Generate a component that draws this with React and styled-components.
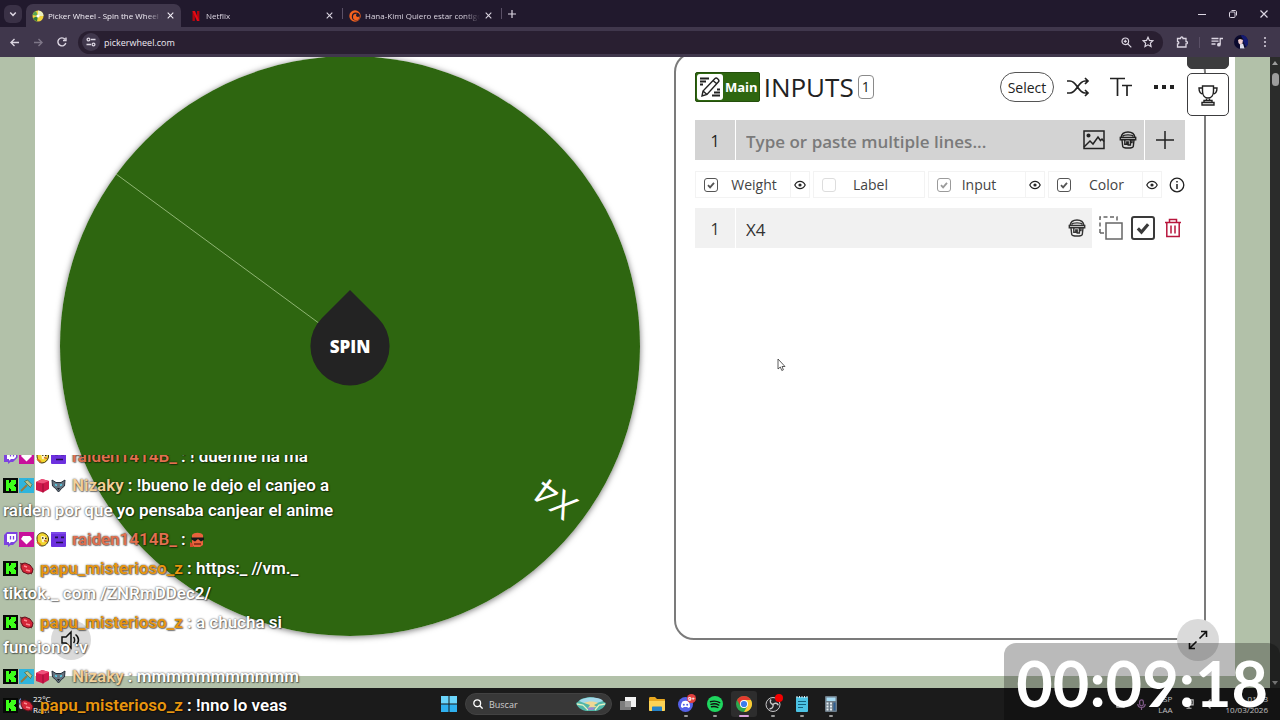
import React, { useState } from 'react';
import styled, { createGlobalStyle, css } from 'styled-components';

const uiFont = `'Open Sans', 'Noto Sans', sans-serif`;
const chatFont = `Roboto, sans-serif`;

const colors = {
  tabStrip: '#21192d',
  toolbar: '#40374c',
  address: '#291f31',
  chromeText: '#dcd6e2',
  sage: '#b2c1a9',
  wheel: '#2e6610',
  ink: '#222222',
  softInk: '#444444',
  taskbar: '#1b1b1b',
};

const GlobalStyle = createGlobalStyle`
  * {
    box-sizing: border-box;
  }
  body {
    margin: 0;
    font-family: ${uiFont};
    overflow: hidden;
  }
  button {
    font-family: inherit;
    color: inherit;
    background: none;
    border: none;
    padding: 0;
    cursor: pointer;
  }
  svg {
    display: block;
    flex: none;
  }
`;

const Screen = styled.div`
  position: relative;
  height: 100vh;
  display: flex;
  flex-direction: column;
  overflow: hidden;
`;

/* ---------- browser ---------- */

const TabStrip = styled.div`
  height: 27px;
  display: flex;
  align-items: center;
  background: ${colors.tabStrip};
  color: ${colors.chromeText};
  padding-left: 4px;
`;

const TabSearch = styled.button`
  width: 18px;
  height: 18px;
  border-radius: 6px;
  background: #3a3146;
  display: flex;
  align-items: center;
  justify-content: center;
  margin-right: 4px;
`;

const Tab = styled.div`
  height: 23px;
  width: 158px;
  display: flex;
  align-items: center;
  gap: 4px;
  padding: 0 9px 0 6px;
  align-self: flex-end;
  font-size: 8px;
  font-weight: 500;
  border-radius: 7px 7px 0 0;
  ${(props) =>
    props.$active &&
    css`
      width: 155px;
      margin-right: 3px;
      padding-right: 7px;
      background: ${colors.toolbar};
      color: #f3eff7;
    `}
`;

const TabTitle = styled.span`
  flex: 1;
  min-width: 0;
  overflow: hidden;
  white-space: nowrap;
  mask-image: linear-gradient(to right, #000 86%, transparent);
`;

const TabDivider = styled.span`
  width: 1px;
  height: 11px;
  margin: 0 ${(props) => props.$space || '0'};
  background: #5a5066;
`;

const IconButton = styled.button`
  width: ${(props) => props.$size || '24px'};
  height: ${(props) => props.$size || '24px'};
  display: flex;
  align-items: center;
  justify-content: center;
  flex: none;
  opacity: ${(props) => (props.$dim ? 0.4 : 1)};
`;

const WindowControls = styled.div`
  margin-left: auto;
  display: flex;
  gap: 7px;
  padding-right: 4px;
`;

const Toolbar = styled.div`
  height: 30px;
  display: flex;
  align-items: center;
  padding: 0 3px 0 2px;
  background: ${colors.toolbar};
  color: ${colors.chromeText};
`;

const Address = styled.div`
  flex: 1;
  height: 23px;
  margin: 0 7px 0 4px;
  padding: 0 4px 0 4px;
  display: flex;
  align-items: center;
  border-radius: 12px;
  background: ${colors.address};
`;

const SiteInfo = styled.button`
  width: 18px;
  height: 18px;
  border-radius: 50%;
  background: #40374c;
  display: flex;
  align-items: center;
  justify-content: center;
`;

const AddressInput = styled.input`
  flex: 1;
  min-width: 0;
  margin-left: 4px;
  padding: 0;
  border: none;
  outline: none;
  background: none;
  color: #eeeaf2;
  font-family: ${uiFont};
  font-size: 9px;
`;

/* ---------- page ---------- */

const Viewport = styled.div`
  flex: 1;
  min-height: 0;
  display: flex;
  overflow: hidden;
`;

const Page = styled.main`
  flex: 1;
  display: flex;
  padding: 0 35px 12px;
  background: ${colors.sage};
`;

const Sheet = styled.div`
  position: relative;
  flex: 1;
  display: grid;
  grid-template-columns: 580fr 532fr;
  gap: 34px;
  padding: 0 29px 36px 25px;
  background: #ffffff;
`;

const Scrollbar = styled.div`
  width: 10px;
  display: flex;
  flex-direction: column;
  align-items: center;
  padding: 4px 0 3px;
  background: #2b2c2b;
`;

const ScrollArrow = styled.span`
  border: 3px solid transparent;
  border-top-width: ${(props) => (props.$down ? '4px' : '0')};
  border-bottom-width: ${(props) => (props.$down ? '0' : '4px')};
  border-top-color: #9d9d9d;
  border-bottom-color: #9d9d9d;
  margin-top: ${(props) => (props.$down ? 'auto' : '0')};
`;

const ScrollThumb = styled.span`
  width: 7px;
  height: 13px;
  margin-top: 8px;
  border-radius: 4px;
  background: #9d9d9d;
`;

const WheelBox = styled.div`
  position: relative;
  align-self: start;
  margin-top: -1px;
  border-radius: 50%;
  box-shadow: 0 1px 6px rgba(0, 0, 0, 0.55);
  > svg {
    width: 100%;
    height: auto;
  }
`;

const SpinButton = styled.button`
  position: absolute;
  inset: 0;
  margin: auto;
  width: 80px;
  height: 112px;
  display: grid;
  place-items: center;
  color: #ffffff;
  font-size: 17px;
  font-weight: 800;
  > * {
    grid-area: 1 / 1;
  }
`;

const RoundButton = styled.button`
  position: absolute;
  width: ${(props) => props.$size};
  height: ${(props) => props.$size};
  bottom: ${(props) => props.$bottom};
  left: ${(props) => props.$left || 'auto'};
  right: ${(props) => props.$right || 'auto'};
  border-radius: 50%;
  background: #dadada;
  color: #111;
  display: flex;
  align-items: center;
  justify-content: center;
`;

const Panel = styled.section`
  position: relative;
  margin-top: -5px;
  padding: 18px 19px;
  border: 2px solid #7b7b7b;
  border-radius: 20px;
  color: ${colors.ink};
`;

const SideTabs = styled.div`
  position: absolute;
  top: 0;
  right: -25px;
  display: flex;
  flex-direction: column;
  gap: 4px;
`;

const SideTab = styled.button`
  width: 42px;
  height: ${(props) => (props.$active ? '15px' : '43px')};
  border: 1px solid #3c3c3e;
  border-radius: ${(props) => (props.$active ? '0 0 5px 5px' : '5px')};
  background: ${(props) => (props.$active ? '#3c3c3e' : '#ffffff')};
  display: flex;
  align-items: center;
  justify-content: center;
`;

const PanelHeader = styled.header`
  height: 30px;
  display: flex;
  align-items: center;
  margin-bottom: 18px;
`;

const WheelTag = styled.span`
  height: 30px;
  display: flex;
  align-items: center;
  gap: 2px;
  padding: 0 1px;
  border: 1px solid #244f0c;
  border-radius: 2px;
  background: ${colors.wheel};
  color: #ffffff;
  font-size: 13px;
  font-weight: 700;
`;

const TagIcon = styled.span`
  width: 26px;
  height: 26px;
  border-radius: 3px;
  background: #ffffff;
  color: #222;
  display: flex;
  align-items: center;
  justify-content: center;
`;

const PanelTitle = styled.h2`
  margin: 0 4px;
  font-size: 26px;
  font-weight: 500;
`;

const CountBadge = styled.span`
  width: 16px;
  height: 24px;
  border: 1px solid #8a8a8a;
  border-radius: 4px;
  font-size: 14px;
  line-height: 22px;
  text-align: center;
`;

const HeaderActions = styled.div`
  margin-left: auto;
  margin-right: 7px;
  display: flex;
  align-items: center;
  gap: 15px;
`;

const SelectButton = styled.button`
  height: 30px;
  width: 54px;
  margin-right: -5px;
  border: 1px solid #555;
  border-radius: 15px;
  font-size: 14px;
`;

const EntryForm = styled.form`
  height: 40px;
  display: flex;
  gap: 1px;
  margin-bottom: 11px;
`;

const RowNumber = styled.span`
  width: 40px;
  height: 40px;
  background: ${(props) => props.$fill};
  font-size: 16px;
  font-weight: ${(props) => props.$weight || 400};
  line-height: 42px;
  text-align: center;
`;

const FieldBox = styled.div`
  flex: 1;
  min-width: 0;
  height: 40px;
  display: flex;
  align-items: center;
  gap: 12px;
  padding: 0 ${(props) => props.$end || '6px'} 0 10px;
  background: ${(props) => props.$fill};
`;

const TextField = styled.input`
  flex: 1;
  min-width: 0;
  padding: 2px 0 0;
  border: none;
  outline: none;
  background: none;
  color: #333;
  font-family: ${uiFont};
  font-size: 17px;
  font-weight: ${(props) => props.$weight || 400};
  &::placeholder {
    color: #7a7a7a;
    opacity: 1;
  }
`;

const AddButton = styled.button`
  width: 40px;
  background: #d3d3d3;
  display: flex;
  align-items: center;
  justify-content: center;
`;

const ColumnToggles = styled.div`
  height: 27px;
  display: grid;
  grid-template-columns: 118fr 115fr 120fr 117fr 20px;
  align-items: center;
  margin-bottom: 10px;
`;

const ToggleCell = styled.div`
  height: 27px;
  display: flex;
  align-items: center;
  margin-right: 3px;
  padding-left: 8px;
  border: 1px solid #f3f3f3;
  color: ${colors.softInk};
  font-size: 14px;
`;

const ToggleLabel = styled.label`
  flex: 1;
  padding-right: ${(props) => props.$inset || '0'};
  text-align: center;
`;

const EyeButton = styled.button`
  width: 19px;
  height: 25px;
  border-left: 1px solid #f3f3f3;
  color: ${colors.ink};
  display: flex;
  align-items: center;
  justify-content: center;
`;

const CheckFrame = styled.span`
  position: relative;
  width: ${(props) => props.$size};
  height: ${(props) => props.$size};
  flex: none;
  color: ${(props) => props.$color};
  svg {
    position: absolute;
    inset: 0;
    width: 100%;
    height: 100%;
    pointer-events: none;
  }
`;

const CheckInput = styled.input`
  appearance: none;
  display: block;
  width: 100%;
  height: 100%;
  margin: 0;
  color: inherit;
  border: ${(props) => props.$line} solid currentColor;
  border-radius: 3px;
  &:not(:checked) + svg {
    display: none;
  }
`;

const EntryRow = styled.div`
  height: 40px;
  display: flex;
  align-items: center;
  color: #333;
`;

const EntryName = styled(FieldBox)`
  margin-left: 1px;
`;

const EntryActions = styled.div`
  display: flex;
  align-items: center;
  gap: 8px;
  padding: 0 2px 0 7px;
`;

/* ---------- taskbar ---------- */

const Taskbar = styled.footer`
  height: 32px;
  display: grid;
  grid-template-columns: 1fr auto 1fr;
  align-items: center;
  background: ${colors.taskbar};
  color: #ffffff;
`;

const Weather = styled.div`
  display: flex;
  align-items: center;
  gap: 4px;
  padding-left: 16px;
  font-size: 8px;
  line-height: 11px;
`;

const TaskItems = styled.div`
  display: flex;
  align-items: center;
  gap: 3px;
`;

const TaskItem = styled.button`
  position: relative;
  width: 26px;
  height: 26px;
  border-radius: 3px;
  display: flex;
  align-items: center;
  justify-content: center;
  background: ${(props) => (props.$active ? '#2d2d2d' : 'none')};
  &::after {
    content: '';
    display: ${(props) => (props.$running ? 'block' : 'none')};
    position: absolute;
    bottom: 0;
    width: ${(props) => (props.$active ? '10px' : '4px')};
    height: 2px;
    border-radius: 1px;
    background: ${(props) => (props.$active ? '#d9a3dc' : '#9a9a9a')};
  }
`;

const TaskSearch = styled.label`
  width: 147px;
  height: 22px;
  display: flex;
  align-items: center;
  gap: 6px;
  padding: 0 4px 0 7px;
  border-radius: 11px;
  background: #383838;
  border: 1px solid #424242;
`;

const TaskSearchInput = styled.input`
  flex: 1;
  min-width: 0;
  padding: 0;
  border: none;
  outline: none;
  background: none;
  color: #ffffff;
  font-family: ${uiFont};
  font-size: 9px;
  &::placeholder {
    color: #cfcfcf;
  }
`;

const Tray = styled.div`
  display: flex;
  align-items: center;
  justify-content: flex-end;
  gap: 11px;
  padding-right: 12px;
  font-size: 8px;
  line-height: 11px;
`;

const TrayText = styled.span`
  text-align: ${(props) => props.$align};
`;

/* ---------- stream overlays ---------- */

const Chat = styled.div`
  position: absolute;
  left: 0;
  bottom: 0;
  width: 350px;
  height: 265px;
  display: flex;
  flex-direction: column;
  justify-content: flex-end;
  gap: 4px;
  padding: 0 3px 2px;
  overflow: hidden;
  font-family: ${chatFont};
  font-size: 17px;
  font-weight: 600;
  line-height: 25px;
  color: #ffffff;
  text-shadow: 0 0 2px rgba(0, 0, 0, 0.8), 1px 1px 1px rgba(0, 0, 0, 0.4);
  pointer-events: none;
`;

const Message = styled.p`
  margin: 0;
  flex: none;
`;

const Badges = styled.span`
  display: inline-flex;
  gap: 1px;
  margin-right: 6px;
  vertical-align: -2px;
`;

const Author = styled.b`
  font-weight: 600;
  color: ${(props) => props.$color};
`;

const Timer = styled.time`
  position: absolute;
  right: 0;
  bottom: 0;
  height: 77px;
  padding: 0 12px;
  border-radius: 12px 12px 0 0;
  background: rgba(0, 0, 0, 0.27);
  color: #ffffff;
  font-family: Lato, sans-serif;
  font-size: 63px;
  font-weight: 700;
  line-height: 80px;
`;

const Pointer = styled.svg`
  position: absolute;
  left: 777px;
  top: 358px;
`;

/* ---------- drawings ---------- */

const Icon = ({ size = 16, box = 24, stroke = 2, children, ...rest }) => (
  <svg
    width={size}
    height={size}
    viewBox={`0 0 ${box} ${box}`}
    fill="none"
    stroke="currentColor"
    strokeWidth={stroke}
    aria-hidden="true"
    {...rest}
  >
    {children}
  </svg>
);

const CloseIcon = ({ size = 7 }) => (
  <Icon size={size} box={10} stroke={1.5}>
    <path d="M1 1l8 8M9 1L1 9" />
  </Icon>
);

const WheelFavicon = () => (
  <svg width="12" height="12" viewBox="0 0 12 12" aria-hidden="true">
    <circle cx="6" cy="6" r="5.5" fill="#f3d43b" />
    <path d="M6 6V.5A5.5 5.5 0 0 1 11.5 6z" fill="#e9efc0" />
    <path d="M6 6L.5 5A5.5 5.5 0 0 1 4 .9z" fill="#5aa552" />
    <path d="M6 6L1 8A5.5 5.5 0 0 0 5 11.4z" fill="#2f7c3a" />
    <circle cx="6" cy="6" r="1.6" fill="#fff" />
  </svg>
);

const NetflixFavicon = () => (
  <svg width="12" height="12" viewBox="0 0 12 12" aria-hidden="true">
    <path d="M2.5 1h2.4v10H2.5zM7 1h2.4v10H7z" fill="#b1060f" />
    <path d="M2.5 1h2.4l4.5 10H7z" fill="#e50914" />
  </svg>
);

const CrunchyFavicon = () => (
  <svg width="12" height="12" viewBox="0 0 12 12" aria-hidden="true">
    <circle cx="6" cy="6" r="5.7" fill="#f4621e" />
    <circle cx="6.8" cy="6.6" r="4" fill="#21192d" />
    <circle cx="7.2" cy="7" r="3.2" fill="#f4621e" />
    <circle cx="8.8" cy="5.2" r="1.7" fill="#21192d" />
  </svg>
);

const EyeIcon = () => (
  <Icon size={12} box={12} stroke={1.2}>
    <path d="M.8 6C2 3.6 3.8 2.4 6 2.4S10 3.6 11.2 6C10 8.4 8.2 9.6 6 9.6S2 8.4.8 6z" />
    <circle cx="6" cy="6" r="1" fill="currentColor" />
  </Icon>
);

const BucketIcon = () => (
  <Icon size={18} box={18} stroke={1.4}>
    <path d="M2 6.500C2.500 3 5 1 9 1s6.500 2 7 5.500" />
    <path d="M3.500 5.500C5 3.300 13 3.300 14.500 5.500" />
    <path d="M1.300 6.500h15.400v2.200H1.300z" />
    <path d="M3 9l.7 6.300c.4 2.300 10.200 2.300 10.600 0L15 9" />
    <path d="M5.800 9v4.200h2V11h1.400v3h2.200V9M11.400 11.500h1.600V9" />
  </Icon>
);

const pixelBadges = {
  kick: (
    <>
      <rect width="15" height="15" fill="#060906" />
      <path d="M3 2h3v3h1V4h1V2h5v4h-1v1h-1v1h1v1h1v4H8v-2H7v-1H6v3H3z" fill="#3dff1a" />
    </>
  ),
  hammer: (
    <>
      <rect width="15" height="15" fill="#2fb4dc" />
      <path d="M2 13l6-6" stroke="#9a7b3d" strokeWidth="1.8" />
      <path d="M5.5 3.5l3-1.5 4.500 4.500-1.500 3z" fill="#b9c48f" stroke="#47683f" strokeWidth=".7" />
    </>
  ),
  cube: (
    <>
      <path d="M1 4l6-3 7 2v8l-6 3.500-7-2.500z" fill="#d0174c" />
      <path d="M1 4l6-3 7 2-6 2.500z" fill="#f0527c" />
      <path d="M8 5.500v9" stroke="#980d35" />
    </>
  ),
  wolf: (
    <>
      <path d="M1 2l4 2.500h5L14 2l-.5 6-3 2.500L7.500 14l-3-3.500-3-2.500z" fill="#66737f" stroke="#27303b" />
      <path d="M4 6.500l2 1M11 6.500l-2 1" stroke="#57cfe8" strokeWidth="1.400" />
      <path d="M6 10h3l-1.500 2z" fill="#17191f" />
    </>
  ),
  twitch: (
    <>
      <path d="M1 3l3-3h10.500v8.500L10 13H7.500L5 15v-2H1z" fill="#7d43e0" />
      <path d="M4 2h9v6l-2 2H8l-2 1.800V10H4z" fill="#fff" />
      <path d="M7.500 4v3.500M10.500 4v3.500" stroke="#7d43e0" strokeWidth="1.300" />
    </>
  ),
  gem: (
    <>
      <rect width="15" height="15" fill="#c8109b" />
      <path d="M4 4h7l2 3-5.500 5.500L2 7z" fill="#fff" />
    </>
  ),
  chick: (
    <>
      <path d="M2 6c0-4 4-6 7-5s5 4 4.500 7-3 6-6.500 6-5-4-5-8z" fill="#f2d62e" stroke="#3d3111" />
      <path d="M6 4.500c2-1 5 0 5.500 2.500S9 11 7 10z" fill="#fff7c8" />
      <path d="M7 6h1.500M10 6.500h1.500" stroke="#2b2110" strokeWidth="1.500" />
      <path d="M2 10l4 3M9 8.500l3 1" stroke="#d9761b" strokeWidth="1.600" />
    </>
  ),
  block: (
    <>
      <rect width="15" height="15" rx="1" fill="#6d31df" />
      <path d="M4 4.500h3v1.800H4zM10 4.500h3v1.800h-3z" fill="#22104f" />
      <path d="M5 10.500h7" stroke="#22104f" strokeWidth="1.500" />
      <path d="M0 0h15v2H0z" fill="#7c49e8" />
    </>
  ),
  bug: (
    <>
      <path d="M2 3l4-1 5 2 3 4-1 4-4 1-5-2-2-4z" fill="#d32638" stroke="#5f101c" />
      <path d="M5 5l3 1M7 9l4 1" stroke="#ff8b93" strokeWidth="1.400" />
      <path d="M1 2l3 2M13 13l-2-1" stroke="#6f1b25" />
    </>
  ),
  cool: (
    <>
      <path d="M2 3c2-3 9-3 11 0v10l-3 2H4l-2-2z" fill="#e8623c" />
      <path d="M1 5.500h13v2.200L11 9.500 8 7 5 9.500 1.500 7.500z" fill="#15181a" />
      <path d="M4 12h7" stroke="#7c2414" strokeWidth="1.500" />
      <path d="M0 10l3 2v3H0z" fill="#d04a2c" />
    </>
  ),
};

const PixelBadge = ({ kind }) => (
  <svg width="15" height="15" viewBox="0 0 15 15" aria-hidden="true">
    {pixelBadges[kind]}
  </svg>
);

const taskIcons = {
  windows: (
    <>
      <path d="M0 0h7.500v7.500H0zM8.500 0H16v7.500H8.500z" fill="#6bd5fb" />
      <path d="M0 8.500h7.500V16H0zM8.500 8.500H16V16H8.500z" fill="#2fb0ee" />
    </>
  ),
  views: (
    <>
      <rect x="5" y="1" width="11" height="10" fill="#f2f2f2" />
      <rect x="0" y="5" width="11" height="9" fill="#8d8d8d" opacity=".85" />
    </>
  ),
  folder: (
    <>
      <path d="M0 2.500C0 1.500.5 1 1.500 1H6l2 2h7c.7 0 1 .3 1 1v9H0z" fill="#e9a820" />
      <path d="M0 5h16v9c0 .7-.3 1-1 1H1c-.7 0-1-.3-1-1z" fill="#fcd255" />
      <path d="M4 10.500h8c.7 0 1 .3 1 1V15H3v-3.500c0-.7.3-1 1-1z" fill="#2582c8" />
    </>
  ),
  discord: (
    <>
      <circle cx="7.500" cy="8.500" r="7.500" fill="#5561e8" />
      <path d="M4.500 5.500c2-1 4-1 6 0 1 1.500 1.700 3.500 1.500 5.500-1 .8-2 1-2 1l-.7-1.100H5.700L5 12s-1-.2-2-1c-.2-2 .5-4 1.500-5.500z" fill="#fff" />
      <circle cx="5.800" cy="8.800" r="1" fill="#5561e8" />
      <circle cx="9.200" cy="8.800" r="1" fill="#5561e8" />
      <circle cx="13.500" cy="2.500" r="4.500" fill="#e2403f" />
      <text x="13.500" y="4.700" fontSize="6" fontWeight="700" fill="#fff" textAnchor="middle">
        9+
      </text>
    </>
  ),
  spotify: (
    <>
      <circle cx="8" cy="8" r="8" fill="#1fd65f" />
      <path
        d="M3.500 5.700c3-.9 6.500-.6 9.200.9M4 8.300c2.600-.8 5.500-.5 7.800.8M4.500 10.800c2.200-.6 4.400-.4 6.400.7"
        fill="none"
        stroke="#111"
        strokeWidth="1.400"
        strokeLinecap="round"
      />
    </>
  ),
  chrome: (
    <>
      <circle cx="8" cy="8" r="8" fill="#2da94f" />
      <path d="M1.070 4A8 8 0 0 1 14.930 4H8z" fill="#e33b2e" />
      <path d="M1.070 4L4.540 10 8 8V4z" fill="#e33b2e" />
      <path d="M14.930 4A8 8 0 0 1 8 16l3.460-6L8 4z" fill="#fcc934" />
      <circle cx="8" cy="8" r="4" fill="#fff" />
      <circle cx="8" cy="8" r="3.100" fill="#3b7ded" />
    </>
  ),
  obs: (
    <>
      <circle cx="8" cy="8.500" r="7" fill="#252427" stroke="#c9c9c9" />
      <path
        d="M8 8.500c-2.500-.5-3.500-3-2-5M8 8.500c1.700-2 4.500-1.500 5.300.8M8 8.500c.7 2.500-1 4.500-3.500 4.200"
        fill="none"
        stroke="#c9c9c9"
        strokeWidth="1.400"
      />
      <circle cx="14" cy="2" r="4" fill="#f40000" />
    </>
  ),
  notepad: (
    <>
      <rect x="2" y="1" width="12" height="15" rx="1" fill="#4cc3e4" />
      <path d="M3 0v2M5.500 0v2M8 0v2M10.500 0v2M13 0v2" stroke="#d5e9ef" />
      <path d="M4 5.500h8M4 8.500h8M4 11.500h5" stroke="#14627e" strokeWidth="1.200" />
    </>
  ),
  calculator: (
    <>
      <rect x="2" y="0" width="12" height="16" rx="1" fill="#6d7c88" />
      <rect x="3.500" y="1.500" width="9" height="3.500" fill="#a8dcf4" />
      <path d="M3.500 6.500h2v2h-2zM7 6.500h2v2H7zM3.500 9.500h2v2h-2zM7 9.500h2v2H7zM3.500 12.500h2v2h-2zM7 12.500h2v2H7z" fill="#e6edf2" />
      <path d="M10.500 6.500h2v8h-2z" fill="#2f5f92" />
    </>
  ),
};

const TaskIcon = ({ kind }) => (
  <svg width="16" height="16" viewBox="0 0 16 16" overflow="visible" aria-hidden="true">
    {taskIcons[kind]}
  </svg>
);

/* ---------- data ---------- */

const users = {
  nizaky: { name: 'Nizaky', color: '#f2cf98', badges: ['kick', 'hammer', 'cube', 'wolf'] },
  raiden: { name: 'raiden1414B_', color: '#e2704f', badges: ['twitch', 'gem', 'chick', 'block'] },
  papu: { name: 'papu_misterioso_z', color: '#e8960f', badges: ['kick', 'bug'] },
};

const messages = [
  { user: users.raiden, text: '! duerme na ma' },
  {
    user: users.nizaky,
    text: '!bueno le dejo el canjeo a raiden por que yo pensaba canjear el anime',
  },
  { user: users.raiden, emote: 'cool' },
  { user: users.papu, text: 'https:_ //vm._ tiktok._ com /ZNRmDDec2/' },
  { user: users.papu, text: 'a chucha si funciono :v' },
  { user: users.nizaky, text: 'mmmmmmmmmmm' },
  { user: users.papu, text: '!nno lo veas' },
];

const columns = [
  { id: 'weight', label: 'Weight', checked: true, color: '#555', eye: true },
  { id: 'label', label: 'Label', checked: false, color: '#dddddd', inset: '19px' },
  { id: 'input', label: 'Input', checked: true, color: '#9b9b9b', inset: '18px', eye: true },
  { id: 'color', label: 'Color', checked: true, color: '#555', eye: true },
];

const taskApps = [
  { kind: 'views', name: 'Vista de tareas' },
  { kind: 'folder', name: 'Explorador' },
  { kind: 'discord', name: 'Discord', running: true },
  { kind: 'spotify', name: 'Spotify', running: true },
  { kind: 'chrome', name: 'Chrome', running: true, active: true },
  { kind: 'obs', name: 'OBS', running: true },
  { kind: 'notepad', name: 'Bloc de notas', running: true },
  { kind: 'calculator', name: 'Calculadora', running: true },
];

/* ---------- sections ---------- */

const BrowserTab = ({ icon, title, active }) => (
  <Tab $active={active}>
    {icon}
    <TabTitle>{title}</TabTitle>
    <IconButton $size="8px" aria-label="Close tab">
      <CloseIcon />
    </IconButton>
  </Tab>
);

const BrowserTabs = () => (
  <TabStrip>
    <TabSearch aria-label="Search tabs">
      <Icon size={8} box={10} stroke={1.8}>
        <path d="M1.500 3.200L5 6.700l3.500-3.500" />
      </Icon>
    </TabSearch>
    <BrowserTab active icon={<WheelFavicon />} title="Picker Wheel - Spin the Wheel t" />
    <BrowserTab icon={<NetflixFavicon />} title="Netflix" />
    <TabDivider />
    <BrowserTab icon={<CrunchyFavicon />} title="Hana-Kimi Quiero estar contigo" />
    <TabDivider />
    <IconButton $size="20px" aria-label="New tab">
      <Icon size={8} box={10} stroke={1.5}>
        <path d="M5 0v10M0 5h10" />
      </Icon>
    </IconButton>
    <WindowControls>
      <IconButton aria-label="Minimize">
        <Icon size={8} box={8} stroke={1}>
          <path d="M0 4.500h8" />
        </Icon>
      </IconButton>
      <IconButton aria-label="Restore">
        <Icon size={8} box={8} stroke={1}>
          <rect x=".5" y="2" width="5.500" height="5.500" rx="1" />
          <path d="M2.500.5H6c1 0 1.500.5 1.500 1.500v3.500" />
        </Icon>
      </IconButton>
      <IconButton aria-label="Close">
        <Icon size={8} box={8} stroke={1.2}>
          <path d="M.5.5l7 7M7.500.5l-7 7" />
        </Icon>
      </IconButton>
    </WindowControls>
  </TabStrip>
);

const BrowserToolbar = () => (
  <Toolbar>
    <IconButton aria-label="Back">
      <Icon size={9} box={10} stroke={1.5}>
        <path d="M10 5H1.500M5 1L1 5l4 4" />
      </Icon>
    </IconButton>
    <IconButton aria-label="Forward" $dim>
      <Icon size={9} box={10} stroke={1.5}>
        <path d="M0 5h8.500M5 1l4 4-4 4" />
      </Icon>
    </IconButton>
    <IconButton aria-label="Reload">
      <Icon size={10} box={10} stroke={1.4}>
        <path d="M8.800 6A4 4 0 1 1 8 2.300M9 .5v3H6" />
      </Icon>
    </IconButton>
    <Address>
      <SiteInfo aria-label="Site information">
        <Icon size={10} box={10} stroke={1.3}>
          <circle cx="2.500" cy="2.500" r="1.400" />
          <circle cx="7.500" cy="7.500" r="1.400" />
          <path d="M5 2.500h4.500M.5 7.500H5" />
        </Icon>
      </SiteInfo>
      <AddressInput aria-label="Address" defaultValue="pickerwheel.com" />
      <IconButton $size="22px" aria-label="Zoom">
        <Icon size={11} box={11} stroke={1.2}>
          <circle cx="4.300" cy="4.300" r="3.300" />
          <path d="M6.800 6.800L10.300 10.300M2.800 4.300h3M4.300 2.800v3" />
        </Icon>
      </IconButton>
      <IconButton $size="22px" aria-label="Bookmark">
        <Icon size={12} box={24} stroke={2.4}>
          <path d="M12 2.500l2.900 6.300 6.900.8-5.100 4.700 1.400 6.800L12 17.700l-6.100 3.400 1.400-6.800L2.200 9.600l6.900-.8z" />
        </Icon>
      </IconButton>
    </Address>
    <IconButton aria-label="Extensions">
      <Icon size={12} box={12} stroke={1.3}>
        <path d="M1.500 2.500h3c0-2 2.500-2 2.500 0h3v3c2 0 2 2.500 0 2.500v3H1.500V8c1.800 0 1.800-2.500 0-2.500z" />
      </Icon>
    </IconButton>
    <TabDivider $space="5px" />
    <IconButton aria-label="Media">
      <Icon size={12} box={12} stroke={1.3}>
        <path d="M.5 2.500h7M.5 5.200h7M.5 8h4M9.200 8.500V2.500H12" />
        <circle cx="7.900" cy="8.700" r="1.200" fill="currentColor" />
      </Icon>
    </IconButton>
    <IconButton aria-label="Profile">
      <svg width="14" height="14" viewBox="0 0 14 14" aria-hidden="true">
        <circle cx="7" cy="7" r="7" fill="#0b0a2e" />
        <path d="M7 0a7 7 0 0 1 5 12L9 6z" fill="#141a72" />
        <path d="M4 4.500C5 3 8 3 9 4.500l-.5 3.500L6.500 10 4.500 8z" fill="#f2cfd0" />
        <path d="M6 9.500l3-1 1.500 5H6z" fill="#dfe0ee" />
        <path d="M3.500 5C4 1.500 9 1.500 9.500 5L6 4z" fill="#0a0914" />
      </svg>
    </IconButton>
    <IconButton aria-label="Menu">
      <svg width="4" height="12" viewBox="0 0 4 12" fill="currentColor" aria-hidden="true">
        <circle cx="2" cy="2" r="1" />
        <circle cx="2" cy="6" r="1" />
        <circle cx="2" cy="10" r="1" />
      </svg>
    </IconButton>
  </Toolbar>
);

const Wheel = () => (
  <WheelBox>
    <svg viewBox="0 0 580 580" aria-label="Wheel">
      <circle cx="290" cy="290" r="290" fill={colors.wheel} />
      <path d="M56 118L290 290" stroke="#8fb573" />
      <text
        transform="translate(495 443) rotate(216)"
        fontFamily={uiFont}
        fontSize="36"
        fill="#ffffff"
        textAnchor="middle"
        y="13"
      >
        X4
      </text>
    </svg>
    <SpinButton>
      <svg width="80" height="112" viewBox="0 0 80 112" aria-hidden="true">
        <path d="M40 0L68 28A39.600 39.600 0 1 1 12 28z" fill="#232323" />
      </svg>
      <span>SPIN</span>
    </SpinButton>
  </WheelBox>
);

const CheckBox = ({ id, label, checked, color, size = '14px', line = '1px' }) => {
  const [on, setOn] = useState(checked);
  return (
    <CheckFrame $size={size} $color={color}>
      <CheckInput
        id={id}
        type="checkbox"
        aria-label={label}
        $line={line}
        checked={on}
        onChange={() => setOn(!on)}
      />
      <Icon box={14} stroke={1.8}>
        <path d="M4 7.200l2.100 2.200L10 4.800" />
      </Icon>
    </CheckFrame>
  );
};

const InputsPanel = () => (
  <Panel>
    <PanelHeader>
      <WheelTag>
        <TagIcon>
          <Icon size={22} box={22} stroke={1.4}>
            <path d="M1 2.500h9M1 5.500h6M1 8.500h3M13 19.500h8M15 16.500h6M18 13.500h3" strokeWidth="1.800" />
            <path d="M3 20l1-5L16 2.500c1.500-1.500 5 1.500 3.500 3.200L8 18.500zM14 4.500l4 3.500M4 15l4 3.500" />
          </Icon>
        </TagIcon>
        Main
      </WheelTag>
      <PanelTitle>INPUTS</PanelTitle>
      <CountBadge>1</CountBadge>
      <HeaderActions>
        <SelectButton>Select</SelectButton>
        <IconButton $size="28px" aria-label="Shuffle">
          <Icon size={24} box={24} stroke={1.7}>
            <path d="M1 6h3c7 0 8 12 15 12h3M1 18h3c7 0 8-12 15-12h3M19 3l3 3-3 3M19 15l3 3-3 3" />
          </Icon>
        </IconButton>
        <IconButton $size="28px" aria-label="Text size">
          <Icon size={22} box={22} stroke={1.7}>
            <path d="M0 2.500h15M7.500 2.500V20M12 9.500h10M17 9.500V20" />
          </Icon>
        </IconButton>
        <IconButton $size="28px" aria-label="More">
          <svg width="22" height="4" viewBox="0 0 22 4" fill="currentColor" aria-hidden="true">
            <path d="M1 0h4v4H1zM9 0h4v4H9zM17 0h4v4h-4z" />
          </svg>
        </IconButton>
      </HeaderActions>
    </PanelHeader>

    <EntryForm onSubmit={(e) => e.preventDefault()}>
      <RowNumber $fill="#d3d3d3" $weight={500}>
        1
      </RowNumber>
      <FieldBox $fill="#d3d3d3">
        <TextField
          aria-label="New entries"
          placeholder="Type or paste multiple lines..."
          $weight={600}
        />
        <IconButton $size="24px" type="button" aria-label="Add image">
          <Icon size={22} box={22} stroke={1.5}>
            <rect x="1" y="2" width="20" height="17.500" />
            <circle cx="5.500" cy="6.500" r="1.300" fill="currentColor" />
            <path d="M1 18l6-6 3 3 5-7 2.500 3.500L19 10l2 2.500" />
          </Icon>
        </IconButton>
        <IconButton $size="20px" type="button" aria-label="Pick color">
          <BucketIcon />
        </IconButton>
      </FieldBox>
      <AddButton type="submit" aria-label="Add">
        <Icon size={18} box={18} stroke={1.5}>
          <path d="M9 0v18M0 9h18" />
        </Icon>
      </AddButton>
    </EntryForm>

    <ColumnToggles>
      {columns.map((col) => (
        <ToggleCell key={col.id}>
          <CheckBox id={col.id} checked={col.checked} color={col.color} />
          <ToggleLabel htmlFor={col.id} $inset={col.inset}>
            {col.label}
          </ToggleLabel>
          {col.eye && (
            <EyeButton aria-label={`Show ${col.label}`}>
              <EyeIcon />
            </EyeButton>
          )}
        </ToggleCell>
      ))}
      <IconButton $size="24px" aria-label="Help">
        <Icon size={16} box={16} stroke={1.3}>
          <circle cx="8" cy="8" r="6.800" />
          <path d="M8 7v5M8 4v1.600" strokeWidth="1.500" />
        </Icon>
      </IconButton>
    </ColumnToggles>

    <EntryRow>
      <RowNumber $fill="#f1f1f1">1</RowNumber>
      <EntryName $fill="#f1f1f1" $end="5px">
        <TextField aria-label="Entry 1" defaultValue="X4" />
        <IconButton $size="20px" aria-label="Entry color">
          <BucketIcon />
        </IconButton>
      </EntryName>
      <EntryActions>
        <IconButton $size="24px" aria-label="Duplicate">
          <Icon size={24} box={24} stroke={1.5} color="#666">
            <path d="M1 17V1h17v5M1 17h4" strokeDasharray="4 2.500" />
            <rect x="7" y="7" width="16" height="16" />
          </Icon>
        </IconButton>
        <CheckBox label="Enable entry" checked color="#3a3a3a" size="24px" line="2px" />
        <IconButton $size="20px" aria-label="Delete">
          <Icon size={20} box={20} stroke={1.5} color="#b8163d">
            <path d="M2 4.500h16M6.500 4.500V1.500h7v3M3.800 4.500v14h12.400v-14M8 7.500v8M12 7.500v8" />
          </Icon>
        </IconButton>
      </EntryActions>
    </EntryRow>

    <SideTabs>
      <SideTab $active aria-label="Inputs" />
      <SideTab aria-label="Results">
        <Icon size={22} box={22} stroke={1.4}>
          <path d="M5.500 2h11v5c0 4-2 7-5.500 7S5.500 11 5.500 7zM5.500 4H2c0 4 1 6 4.500 6M16.500 4H20c0 4-1 6-4.500 6M9.500 14v2.500h3V14M7 16.500h8v2H7zM5 18.500h12V21H5z" />
        </Icon>
      </SideTab>
    </SideTabs>
  </Panel>
);

const WindowsTaskbar = () => (
  <Taskbar>
    <Weather>
      <svg width="13" height="14" viewBox="0 0 13 14" aria-hidden="true">
        <path d="M5 1a4 4 0 1 0 5 6A5 5 0 0 1 5 1z" fill="#6a8fe0" />
        <path d="M3 9c0-3 4-4 5-2 3-.5 4 1 4 2.500S11 12 9 12H5C3.500 12 3 10.500 3 9z" fill="#c7d2e4" />
      </svg>
      <span>
        22°C
        <br />
        Rain
      </span>
    </Weather>
    <TaskItems>
      <TaskItem aria-label="Inicio">
        <TaskIcon kind="windows" />
      </TaskItem>
      <TaskSearch>
        <Icon size={10} box={10} stroke={1.3}>
          <circle cx="4.200" cy="4.200" r="3.400" />
          <path d="M6.800 6.800L9.600 9.600" />
        </Icon>
        <TaskSearchInput aria-label="Buscar" placeholder="Buscar" />
        <svg width="32" height="16" viewBox="0 0 32 16" aria-hidden="true">
          <path d="M1 7c3-1 4-5 9-5 5-2 9-1 12 1 5 0 6 3 9 4-1 4-5 7-10 8H11C6 14 2 11 1 7z" fill="#51b6a9" />
          <path d="M4 5c4-4 20-5 24 0l-6 2H9z" fill="#a5d9ea" />
          <path d="M9 7c4-2 10-2 14 0l-4 2 3 2-9 1 2-3z" fill="#f0d795" />
          <path d="M2 8l6 1 5 5M30 8l-6 1-4 5" stroke="#e4f1c4" strokeWidth="1.300" fill="none" />
          <path d="M12 12c3-1 6-1 8 0l-2 2h-4z" fill="#9a8bd2" />
        </svg>
      </TaskSearch>
      {taskApps.map((app) => (
        <TaskItem key={app.kind} aria-label={app.name} $running={app.running} $active={app.active}>
          <TaskIcon kind={app.kind} />
        </TaskItem>
      ))}
    </TaskItems>
    <Tray>
      <Icon size={9} box={10} stroke={1.3}>
        <path d="M1 2h8v6H1zM3 8l5-5" />
      </Icon>
      <Icon size={11} box={12} stroke={1.3} color="#b57fc0">
        <rect x="4" y="1" width="4" height="6.500" rx="2" />
        <path d="M2 5.500c0 5 8 5 8 0M6 9.500V12" />
      </Icon>
      <TrayText $align="center">
        ESP
        <br />
        LAA
      </TrayText>
      <Icon size={10} box={12} stroke={1.3}>
        <path d="M1 1h10v6H1zM6 7v4M3 11h6" />
      </Icon>
      <Icon size={10} box={12} stroke={1.3}>
        <path d="M1 4h2l3-3v10L3 8H1zM8.500 4c1 1 1 3 0 4" />
      </Icon>
      <TrayText $align="right">
        01:23
        <br />
        10/03/2026
      </TrayText>
    </Tray>
  </Taskbar>
);

const StreamChat = () => (
  <Chat>
    {messages.map(({ user, text, emote }, index) => (
      <Message key={index}>
        <Badges>
          {user.badges.map((kind) => (
            <PixelBadge key={kind} kind={kind} />
          ))}
        </Badges>
        <Author $color={user.color}>{user.name}</Author> : {text}
        {emote && (
          <Badges>
            <PixelBadge kind={emote} />
          </Badges>
        )}
      </Message>
    ))}
  </Chat>
);

export default function App() {
  return (
    <Screen>
      <GlobalStyle />
      <BrowserTabs />
      <BrowserToolbar />
      <Viewport>
        <Page>
          <Sheet>
            <Wheel />
            <InputsPanel />
            <RoundButton $size="40px" $bottom="16px" $left="16px" aria-label="Sound">
              <Icon size={20} box={20} stroke={1.5}>
                <path d="M1 7h4l5-5v16l-5-5H1zM12.500 7c1.500 1.500 1.500 4.500 0 6M14.500 4.500c4 3 4 8 0 11" />
              </Icon>
            </RoundButton>
            <RoundButton $size="42px" $bottom="15px" $right="16px" aria-label="Fullscreen">
              <Icon size={20} box={20} stroke={1.6}>
                <path d="M11.500 8.500L18.500 1.500M13 1.500h5.500V7M8.500 11.500L1.500 18.500M1.500 13v5.500H7" />
              </Icon>
            </RoundButton>
          </Sheet>
        </Page>
        <Scrollbar>
          <ScrollArrow />
          <ScrollThumb />
          <ScrollArrow $down />
        </Scrollbar>
      </Viewport>
      <WindowsTaskbar />
      <StreamChat />
      <Timer>00:09:18</Timer>
      <Pointer width="9" height="14" viewBox="0 0 9 14" aria-hidden="true">
        <path d="M1 1v10l2.300-2 1.500 3.500 1.600-.7L5 8.500h3z" fill="#fff" stroke="#333" strokeWidth=".8" />
      </Pointer>
    </Screen>
  );
}
